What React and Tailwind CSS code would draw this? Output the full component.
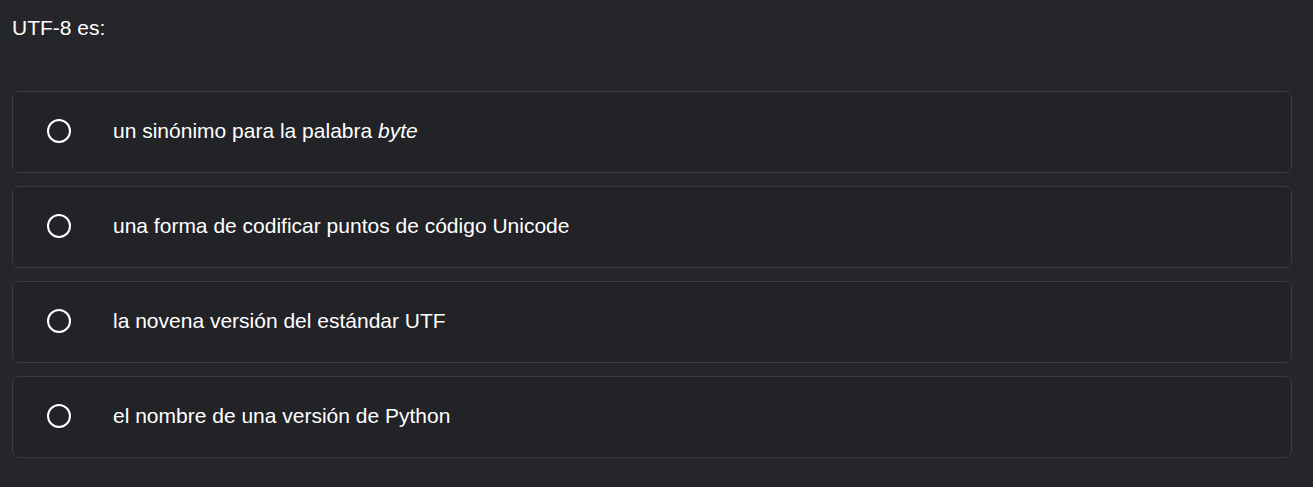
import { useState } from "react";

const OPCIONES = [
  { id: 1, texto: <>un sinónimo para la palabra <em>byte</em></> },
  { id: 2, texto: "una forma de codificar puntos de código Unicode" },
  { id: 3, texto: "la novena versión del estándar UTF" },
  { id: 4, texto: "el nombre de una versión de Python" },
];

const App = () => {
  const [seleccion, setSeleccion] = useState(null);

  return (
    <div
      className="min-h-screen bg-[#25262a] px-3 pt-[16px] pb-[29px] text-white"
      style={{ fontFamily: '"Liberation Sans", Arial, sans-serif' }}
    >
      <div className="text-[21px] leading-[24px]">UTF-8 es:</div>

      <div className="mt-[51px] flex flex-col gap-[13px] w-[1280px]">
        {OPCIONES.map((o) => (
          <label
            key={o.id}
            onClick={() => setSeleccion(o.id)}
            className="flex h-[82px] items-center rounded-[7px] border border-[#3a3b3f] bg-[#222327] pb-[2px] cursor-pointer"
          >
            {/* radio */}
            <span className="ml-[34px] flex h-6 w-6 items-center justify-center rounded-full border-[2.5px] border-white">
              {seleccion === o.id && (
                <span className="h-3 w-3 rounded-full bg-white" />
              )}
            </span>
            <span className="ml-[42px] text-[21px] leading-[24px]">
              {o.texto}
            </span>
          </label>
        ))}
      </div>
    </div>
  );
};

export default App;
